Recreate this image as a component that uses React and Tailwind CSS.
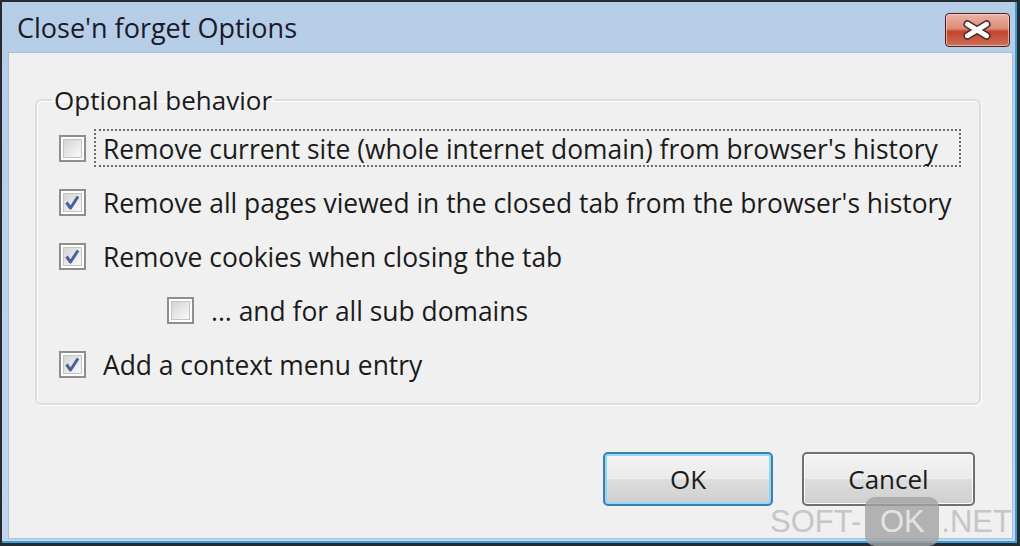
import React from 'react';

const rows = [
  { label: "Remove current site (whole internet domain) from browser's history", checked: false, focused: true },
  { label: "Remove all pages viewed in the closed tab from the browser's history", checked: true },
  { label: 'Remove cookies when closing the tab', checked: true },
  { label: '... and for all sub domains', checked: false, indent: true },
  { label: 'Add a context menu entry', checked: true },
];

const CheckBox = ({ checked }) => (
  <span className="relative flex h-[27px] w-[27px] shrink-0 border-2 border-[#8e8e8e] bg-white p-[2px]">
    <span className="block h-full w-full border border-[#c3c3c3] bg-gradient-to-br from-[#d4d4d4] to-[#fafafa]" />
    {checked && (
      <svg className="absolute inset-0" width="23" height="23" viewBox="0 0 23 23">
        <path d="M5.5 11.5 L9.5 17 L17 5.5" fill="none" stroke="#4a5fa0" strokeWidth="3" strokeLinejoin="round" />
      </svg>
    )}
  </span>
);

const App = () => {
  return (
    <div className="relative flex h-[546px] w-[1020px] overflow-hidden bg-[#262b31] pb-[3px] pl-[2px] pr-[3px] pt-[2px] font-['Open_Sans',sans-serif] text-[#1b1b1b]">
      <div className="flex flex-1 flex-col border-b-2 border-r-2 border-[#3b9fd6] bg-gradient-to-b from-[#b5cde7] to-[#c2d7ed] pb-[2px] pl-[6px] pr-[2px]">
        {/* Title bar */}
        <div className="flex h-[50px] shrink-0 items-start justify-between">
          <div className="pl-[9px] pt-[10px] text-[27px] leading-[32px] text-[#1a1a2a]">Close'n forget Options</div>
          <button
            type="button"
            className="mr-[3px] mt-[11px] flex h-[34px] w-[65px] items-center justify-center rounded-[4px] border border-[#4a2020] bg-[linear-gradient(to_bottom,#ebb3a6_0%,#dc8d78_45%,#c4432b_55%,#d0705a_100%)] shadow-[inset_0_0_0_1px_rgba(255,220,210,0.6)]"
          >
            <svg width="65" height="34" viewBox="0 0 65 34">
              <path d="M22 11 L42 23 M42 11 L22 23" stroke="#4a2a2a" strokeWidth="8" strokeLinecap="round" />
              <path d="M22 11 L42 23 M42 11 L22 23" stroke="#ffffff" strokeWidth="5" strokeLinecap="round" />
            </svg>
          </button>
        </div>

        {/* Client area */}
        <div className="flex flex-1 flex-col border border-[#a9c0d8] bg-[#f0f0f0] pl-[26px] pr-[31px] pt-[33px]">
          <fieldset className="h-[319px] w-[946px] rounded-[6px] border-2 border-[#d8dfe4] pb-[10px] pt-[7px] shadow-[inset_1px_1px_0_#ffffff,1px_1px_0_#ffffff]">
            <legend className="ml-[15px] px-[2px] text-[26px] leading-[28px]">Optional behavior</legend>
            {rows.map((row) => (
              <div key={row.label} className={`flex h-[54px] items-center ${row.indent ? 'pl-[130px]' : 'pl-[22px]'}`}>
                <CheckBox checked={row.checked} />
                {row.focused ? (
                  <span className="ml-[8px] flex h-[38px] w-[867px] items-center border-2 border-dotted border-[#6a6a6a] pl-[7px] pt-[3px] text-[26.4px]">
                    {row.label}
                  </span>
                ) : (
                  <span className="ml-[17px] pt-[3px] text-[26.4px]">{row.label}</span>
                )}
              </div>
            ))}
          </fieldset>

          <div className="mt-[47px] flex justify-end gap-[29px] pr-[6px]">
            <button
              type="button"
              className="flex h-[54px] w-[170px] items-center justify-center rounded-[5px] border-2 border-[#3c7fb1] bg-[linear-gradient(to_bottom,#f3f3f3_0%,#ebebeb_50%,#dddddd_51%,#cfcfcf_100%)] text-[26px] shadow-[inset_0_0_0_2px_#8fd8f8]"
            >
              OK
            </button>
            <button
              type="button"
              className="flex h-[54px] w-[173px] items-center justify-center rounded-[5px] border-2 border-[#707070] bg-[linear-gradient(to_bottom,#f3f3f3_0%,#ebebeb_50%,#dddddd_51%,#cfcfcf_100%)] text-[26px] shadow-[inset_0_0_0_1px_#fbfbfb]"
            >
              Cancel
            </button>
          </div>
        </div>
      </div>

      {/* Watermark */}
      <div className="absolute left-[770px] top-[497px] flex h-[49px] items-center font-['Liberation_Sans',sans-serif] text-[31px] leading-none text-[#c6c6c6]">
        <span>SOFT-</span>
        <span className="ml-[4px] flex h-[49px] w-[74px] items-center justify-center rounded-[10px] bg-[#a3a3a3]/80 text-[#e4e4e4]">OK</span>
        <span className="ml-[2px]">.NET</span>
      </div>
    </div>
  );
};

export default App;
